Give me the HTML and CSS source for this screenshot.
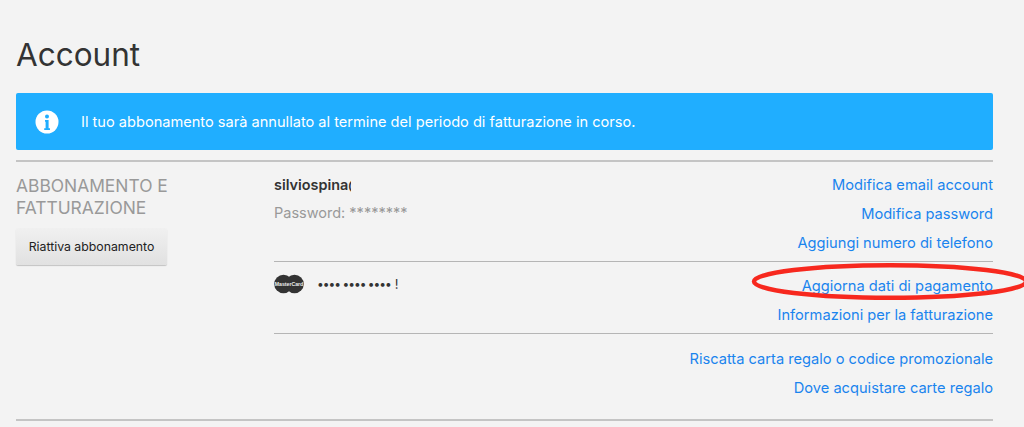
FILE: index.html
```html
<!DOCTYPE html>
<html lang="it">
<head>
<meta charset="utf-8">
<title>Account</title>
<link rel="stylesheet" href="styles.css">
</head>
<body>
<main class="page">
  <h1 class="title">Account</h1>
  <div class="banner">
    <svg class="info" viewBox="0 0 24 24" width="24" height="24"><circle cx="12" cy="12" r="11.5" fill="#fff"/><circle cx="12" cy="6.4" r="2" fill="#20aeff"/><path d="M10 10h3.6v8.2H15V20H9.2v-1.8h1.4v-6.4H10z" fill="#20aeff"/></svg>
    <span>Il tuo abbonamento sarà annullato al termine del periodo di fatturazione in corso.</span>
  </div>
  <section class="membership">
    <div class="side">
      <h2 class="side-title">ABBONAMENTO E FATTURAZIONE</h2>
      <button class="btn">Riattiva abbonamento</button>
    </div>
    <div class="content">
      <div class="block block-account">
        <div class="info-col">
          <div class="email"><span>silviospina@</span></div>
          <div class="password">Password: ********</div>
        </div>
        <div class="links">
          <a href="#">Modifica email account</a>
          <a href="#">Modifica password</a>
          <a href="#">Aggiungi numero di telefono</a>
        </div>
      </div>
      <div class="block block-pay">
        <div class="card">
          <svg class="mc" viewBox="0 0 30 20" width="30" height="20"><circle cx="9.5" cy="10" r="9.3" fill="#333"/><circle cx="20.5" cy="10" r="9.3" fill="#333"/><rect x="1" y="7.6" width="28" height="4.8" fill="#333"/><text x="15" y="12" class="mc-text" text-anchor="middle">MasterCard</text></svg>
          <span class="dots">•••• •••• ••••</span><span class="last">!</span>
        </div>
        <div class="links">
          <a href="#">Aggiorna dati di pagamento</a>
          <a href="#">Informazioni per la fatturazione</a>
        </div>
      </div>
      <div class="block block-gift">
        <div class="links">
          <a href="#">Riscatta carta regalo o codice promozionale</a>
          <a href="#">Dove acquistare carte regalo</a>
        </div>
      </div>
    </div>
  </section>
</main>
<svg class="circle" viewBox="0 0 290 50" width="290" height="50"><ellipse cx="146" cy="19.5" rx="136" ry="16.3" fill="none" stroke="#f7281e" stroke-width="4.5"/></svg>
</body>
</html>
```
FILE: styles.css
```css
html, body {
  margin: 0;
  height: 100%;
  overflow: hidden;
  background: #f3f3f3;
}
body {
  position: relative;
  font-family: Inter, "Noto Sans", sans-serif;
  color: #333;
}
.page {
  padding: 0 31px 0 16px;
}
.title {
  margin: 0;
  padding-top: 37px;
  height: 56px;
  font-size: 31.5px;
  line-height: 36px;
  font-weight: 400;
  color: #333;
}
.banner {
  display: flex;
  align-items: center;
  height: 57px;
  border-radius: 2px;
  background: #20aeff;
  color: #fff;
  font-size: 14.6px;
  padding-left: 19px;
  gap: 22px;
}
.info { flex: none; }
.membership {
  display: flex;
  margin-top: 10px;
  border-top: 2px solid #c4c4c4;
  border-bottom: 2px solid #c4c4c4;
  height: 261px;
  box-sizing: border-box;
}
.side {
  width: 258px;
  flex: none;
  padding-top: 13px;
}
.side-title {
  margin: 0;
  width: 200px;
  font-size: 17.4px;
  line-height: 22px;
  font-weight: 400;
  color: #999;
}
.btn {
  display: block;
  margin-top: 9px;
  width: 151px;
  height: 37px;
  padding: 0;
  border: 0;
  border-radius: 2px;
  background: linear-gradient(#f0f0f0, #e1e1e1);
  box-shadow: 0 1px 1px rgba(0,0,0,.2);
  font: 12.3px Inter, "Noto Sans", sans-serif;
  color: #222;
}
.content {
  flex: 1;
  min-width: 0;
}
.block {
  display: flex;
  justify-content: space-between;
  border-bottom: 1px solid #b5b5b5;
  box-sizing: border-box;
}
.block-account { height: 100px; padding-top: 10px; }
.block-pay { height: 72px; padding-top: 10px; }
.block-gift { border-bottom: 0; padding-top: 15px; justify-content: flex-end; }
.email {
  width: 77px;
  overflow: hidden;
  white-space: nowrap;
  font-size: 14.4px;
  font-weight: 600;
  line-height: 25px;
  color: #333;
}
.password {
  font-size: 14.5px;
  line-height: 31px;
  color: #999;
}
.links {
  display: flex;
  flex-direction: column;
  align-items: flex-end;
  gap: 9px;
  padding-top: 3px;
}
.block-pay .links { padding-top: 4px; }
.block-gift .links { padding-top: 0; }
.links a {
  font-size: 14.65px;
  line-height: 20px;
  color: #1a84ee;
  text-decoration: none;
}
.card {
  display: flex;
  align-items: center;
  height: 24px;
}
.mc { flex: none; }
.mc-text {
  font: 700 5.2px "Liberation Sans", sans-serif;
  fill: #eee;
}
.dots {
  margin-left: 13px;
  font-size: 12px;
  line-height: 24px;
  letter-spacing: -1px;
  color: #333;
}
.last {
  margin-left: 4px;
  font-size: 13px;
  font-weight: 400;
  color: #333;
}
.circle {
  position: absolute;
  left: 744px;
  top: 262px;
}
```
